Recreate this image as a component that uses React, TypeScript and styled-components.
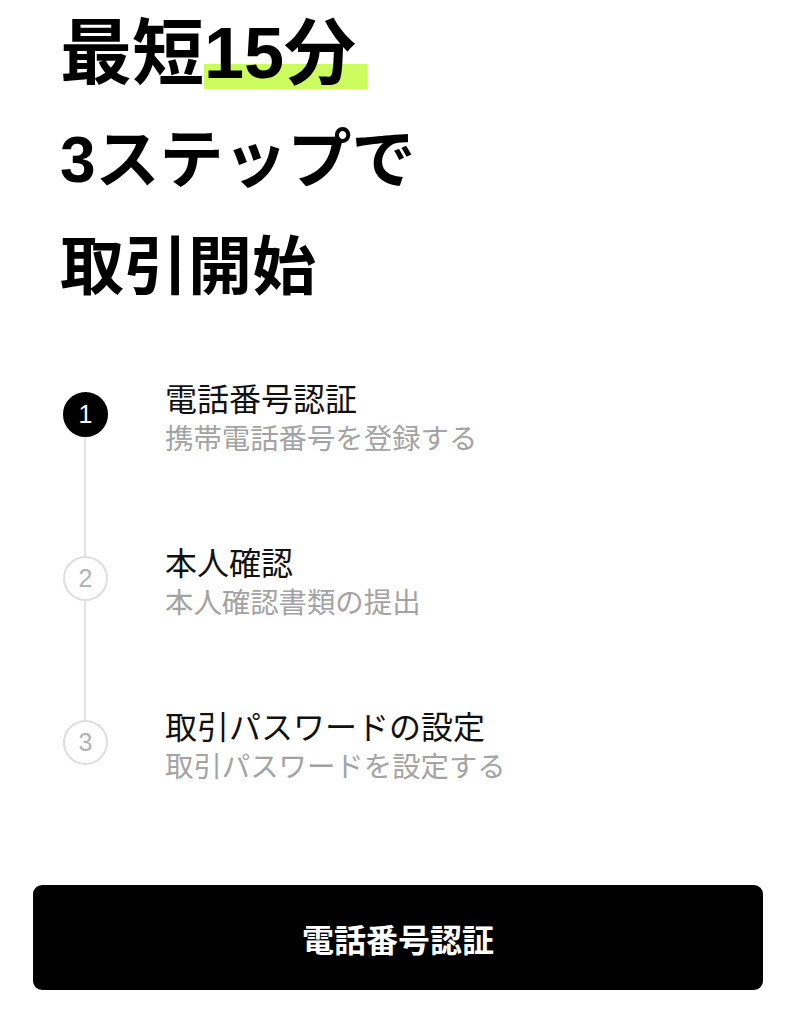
import React from "react";
import styled, { createGlobalStyle } from "styled-components";

const GlobalStyle = createGlobalStyle`
  html, body {
    margin: 0;
    padding: 0;
    background: #ffffff;
  }
  body {
    font-family: "Noto Sans CJK JP", "Liberation Sans", sans-serif;
    color: #000;
  }
  * { box-sizing: border-box; }
`;

const Page = styled.div`
  width: 796px;
  min-height: 1024px;
  display: flex;
  flex-direction: column;
  background: #fff;
`;

const Heading = styled.h1`
  margin: 0;
  padding-left: 60px;
  font-family: "Liberation Sans", "Noto Sans CJK JP", sans-serif;
  font-weight: 700;
  letter-spacing: 0;
  color: #000;
`;

const Line = styled.span<{ $size: number }>`
  display: block;
  white-space: nowrap;
  font-size: ${(p) => p.$size}px;
  line-height: 107px;
`;

const Highlight = styled.span`
  display: inline-block;
  padding-right: 11px;
  background: linear-gradient(
    to bottom,
    transparent 0,
    transparent 64px,
    #ccfb5d 64px,
    #ccfb5d 89px,
    transparent 89px
  );
`;

const Steps = styled.ol`
  position: relative;
  list-style: none;
  margin: 56px 0 0;
  padding: 0 0 0 63px;
  display: flex;
  flex-direction: column;
  gap: 84px;

  &::before {
    content: "";
    position: absolute;
    left: 84px;
    top: 37px;
    bottom: 43px;
    width: 2px;
    background: #e3e3e3;
  }
`;

const Step = styled.li`
  display: grid;
  grid-template-columns: 45px 1fr;
  column-gap: 57px;
  align-items: center;
  height: 80px;
`;

const Circle = styled.div<{ $active?: boolean }>`
  position: relative;
  z-index: 1;
  width: 45px;
  height: 45px;
  margin-bottom: 6px;
  border-radius: 50%;
  display: flex;
  align-items: center;
  justify-content: center;
  font-family: "Liberation Sans", "Roboto", sans-serif;
  font-size: 25px;
  background: ${(p) => (p.$active ? "#000" : "#fff")};
  color: ${(p) => (p.$active ? "#fff" : "#b3b3b3")};
  border: 2px solid ${(p) => (p.$active ? "#000" : "#dedede")};
`;

const StepText = styled.div`
  display: flex;
  flex-direction: column;
`;

const StepTitle = styled.div`
  font-size: 32px;
  line-height: 40px;
  font-weight: 400;
  color: #111;
  white-space: nowrap;
`;

const StepSub = styled.div`
  font-size: 28.4px;
  line-height: 40px;
  font-weight: 400;
  color: #a3a3a3;
  white-space: nowrap;
`;

const Button = styled.button`
  margin: 100px 33px 0;
  height: 105px;
  border: none;
  border-radius: 9px;
  background: #000;
  color: #fff;
  font-family: "Noto Sans CJK JP", sans-serif;
  font-size: 32px;
  font-weight: 700;
  cursor: pointer;
`;

const steps = [
  { n: 1, title: "電話番号認証", sub: "携帯電話番号を登録する", active: true },
  { n: 2, title: "本人確認", sub: "本人確認書類の提出", active: false },
  { n: 3, title: "取引パスワードの設定", sub: "取引パスワードを設定する", active: false },
];

export default function App() {
  return (
    <Page>
      <GlobalStyle />
      <Heading>
        <Line $size={72}>
          最短<Highlight>15分</Highlight>
        </Line>
        <Line $size={64}>3ステップで</Line>
        <Line $size={64}>取引開始</Line>
      </Heading>
      <Steps>
        {steps.map((s) => (
          <Step key={s.n}>
            <Circle $active={s.active}>{s.n}</Circle>
            <StepText>
              <StepTitle>{s.title}</StepTitle>
              <StepSub>{s.sub}</StepSub>
            </StepText>
          </Step>
        ))}
      </Steps>
      <Button>電話番号認証</Button>
    </Page>
  );
}
